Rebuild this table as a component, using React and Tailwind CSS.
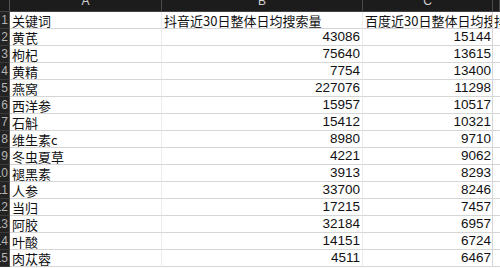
import React from "react";

const rows = [
  ["黄芪", "43086", "15144"],
  ["枸杞", "75640", "13615"],
  ["黄精", "7754", "13400"],
  ["燕窝", "227076", "11298"],
  ["西洋参", "15957", "10517"],
  ["石斛", "15412", "10321"],
  ["维生素c", "8980", "9710"],
  ["冬虫夏草", "4221", "9062"],
  ["褪黑素", "3913", "8293"],
  ["人参", "33700", "8246"],
  ["当归", "17215", "7457"],
  ["阿胶", "32184", "6957"],
  ["叶酸", "14151", "6724"],
  ["肉苁蓉", "4511", "6467"],
];

const cjk = { fontFamily: '"Noto Sans CJK SC", "Liberation Sans", sans-serif' };
const num = { fontFamily: '"Liberation Sans", Arial, sans-serif' };

function RowNum({ n }) {
  return (
    <div className="w-[10px] shrink-0 h-full bg-[#232323] border-r border-[#555] border-b border-b-[#3a3a3a] overflow-hidden flex items-center justify-end pr-[1px]">
      <span className="text-[12px] text-[#b5b5b5] leading-none" style={num}>{n}</span>
    </div>
  );
}

export default function App() {
  return (
    <div className="w-[500px] h-[268px] overflow-hidden bg-white">
      <div className="flex h-[12px] bg-[#1c1c1c] border-b border-[#444]">
        <div className="w-[10px] shrink-0 border-r border-[#555]" />
        {[
          ["A", "w-[152px]"],
          ["B", "w-[201px]"],
          ["C", "w-[130px]"],
          ["", "flex-1"],
        ].map(([l, w], i) => (
          <div key={i} className={`${w} shrink-0 border-r border-[#4a4a4a] flex justify-center overflow-hidden`}>
            <span className="text-[12px] text-[#d0d0d0] leading-[12px] -mt-[5px]" style={num}>{l}</span>
          </div>
        ))}
      </div>
      <div className="flex h-[17px]">
        <RowNum n="1" />
        <div className="w-[152px] shrink-0 border-r border-r-[#ececec] border-b border-b-[#d6d6d6] flex items-center pl-[2px] overflow-hidden">
          <span className="text-[13px] text-[#111] leading-none whitespace-nowrap" style={cjk}>关键词</span>
        </div>
        <div className="w-[201px] shrink-0 border-r border-r-[#ececec] border-b border-b-[#d6d6d6] flex items-center pl-[2px] overflow-hidden">
          <span className="text-[13px] text-[#111] leading-none whitespace-nowrap" style={cjk}>抖音近30日整体日均搜索量</span>
        </div>
        <div className="w-[130px] shrink-0 border-r border-r-[#d6d6d6] border-b border-b-[#d6d6d6] flex items-center pl-[2px] overflow-hidden">
          <span className="text-[13px] text-[#111] leading-none whitespace-nowrap" style={cjk}>百度近30日整体日均搜索量</span>
        </div>
        <div className="flex-1 border-b border-[#d6d6d6] flex items-center pl-[1px] overflow-hidden">
          <span className="text-[13px] text-[#111] leading-none whitespace-nowrap" style={cjk}>抖音</span>
        </div>
      </div>
      {rows.map(([k, b, c], i) => (
        <div key={i} className="flex h-[17px]">
          <RowNum n={String(i + 2)} />
          <div className="w-[152px] shrink-0 border-r border-r-[#ececec] border-b border-b-[#d6d6d6] flex items-center pl-[2px] overflow-hidden">
            <span className="text-[13px] text-[#111] leading-none whitespace-nowrap" style={cjk}>{k}</span>
          </div>
          <div className="w-[201px] shrink-0 border-r border-r-[#ececec] border-b border-b-[#d6d6d6] flex items-center justify-end pr-[2px] overflow-hidden">
            <span className="text-[13.5px] text-[#111] leading-none" style={num}>{b}</span>
          </div>
          <div className="w-[130px] shrink-0 border-r border-r-[#d6d6d6] border-b border-b-[#d6d6d6] flex items-center justify-end pr-[1px] overflow-hidden">
            <span className="text-[13.5px] text-[#111] leading-none" style={num}>{c}</span>
          </div>
          <div className="flex-1 border-b border-[#d6d6d6]" />
        </div>
      ))}
    </div>
  );
}
